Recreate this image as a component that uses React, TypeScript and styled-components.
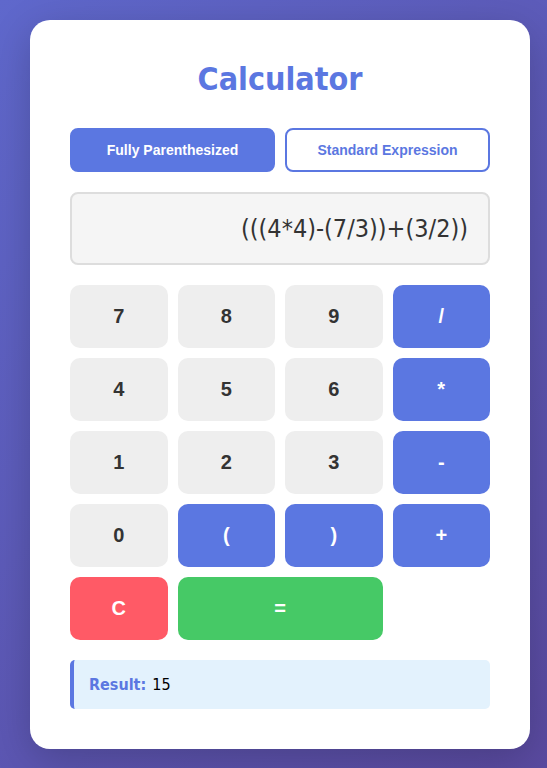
import React from "react";
import styled, { createGlobalStyle } from "styled-components";

const GlobalStyle = createGlobalStyle`
  html, body { margin: 0; padding: 0; }
  body {
    min-height: 100vh;
    background: linear-gradient(135deg, #5f68cc 0%, #5a4aa0 100%);
    font-family: "DejaVu Sans Condensed", "DejaVu Sans", sans-serif;
  }
`;

const Page = styled.div`
  min-height: 100vh;
  display: flex;
  align-items: center;
  justify-content: flex-start;
  padding-left: 30px;
  box-sizing: border-box;
`;

const Card = styled.div`
  width: 500px;
  box-sizing: border-box;
  background: #ffffff;
  border-radius: 20px;
  padding: 40px;
  box-shadow: 0 10px 40px rgba(0, 0, 0, 0.2);
`;

const Title = styled.h1`
  margin: 0 0 30px;
  text-align: center;
  color: #5b77e1;
  font-family: "DejaVu Sans Condensed", "DejaVu Sans", sans-serif;
  font-weight: 700;
  font-size: 32px;
  line-height: 38px;
`;

const ModeRow = styled.div`
  display: grid;
  grid-template-columns: 1fr 1fr;
  gap: 10px;
  margin-bottom: 20px;
`;

const ModeButton = styled.button<{ $active?: boolean }>`
  height: 44px;
  border-radius: 8px;
  border: 2px solid #5b77e1;
  background: ${(p) => (p.$active ? "#5b77e1" : "#ffffff")};
  color: ${(p) => (p.$active ? "#ffffff" : "#5b77e1")};
  font-family: "Liberation Sans", Arial, sans-serif;
  font-weight: 700;
  font-size: 14px;
  cursor: pointer;
`;

const Display = styled.div`
  height: 73px;
  box-sizing: border-box;
  border: 2px solid #dddddd;
  border-radius: 8px;
  background: #f5f5f5;
  padding: 0 20px;
  display: flex;
  align-items: center;
  justify-content: flex-end;
  font-family: "DejaVu Sans Condensed", "DejaVu Sans", sans-serif;
  font-size: 25px;
  color: #333333;
  margin-bottom: 20px;
`;

const Keys = styled.div`
  display: grid;
  grid-template-columns: repeat(4, 1fr);
  grid-auto-rows: 63px;
  gap: 10px;
  margin-bottom: 20px;
`;

type Variant = "num" | "op" | "clear" | "eq";

const bg: Record<Variant, string> = {
  num: "#eeeeee",
  op: "#5b77e1",
  clear: "#ff5a66",
  eq: "#46c966",
};

const Key = styled.button<{ $variant: Variant; $span?: number }>`
  grid-column: span ${(p) => p.$span ?? 1};
  border: none;
  border-radius: 10px;
  background: ${(p) => bg[p.$variant]};
  color: ${(p) => (p.$variant === "num" ? "#333333" : "#ffffff")};
  font-family: "Liberation Sans", Arial, sans-serif;
  font-weight: 700;
  font-size: 20px;
  cursor: pointer;
`;

const Result = styled.div`
  height: 49px;
  box-sizing: border-box;
  background: #e3f2fd;
  border-left: 4px solid #5b77e1;
  border-radius: 5px;
  padding: 0 15px;
  display: flex;
  align-items: center;
  gap: 6px;
  font-family: "DejaVu Sans Condensed", "DejaVu Sans", sans-serif;
  font-size: 16px;
  color: #000000;
`;

const ResultLabel = styled.strong`
  color: #5b77e1;
  font-weight: 700;
`;

const keys: { label: string; variant: Variant; span?: number }[] = [
  { label: "7", variant: "num" },
  { label: "8", variant: "num" },
  { label: "9", variant: "num" },
  { label: "/", variant: "op" },
  { label: "4", variant: "num" },
  { label: "5", variant: "num" },
  { label: "6", variant: "num" },
  { label: "*", variant: "op" },
  { label: "1", variant: "num" },
  { label: "2", variant: "num" },
  { label: "3", variant: "num" },
  { label: "-", variant: "op" },
  { label: "0", variant: "num" },
  { label: "(", variant: "op" },
  { label: ")", variant: "op" },
  { label: "+", variant: "op" },
  { label: "C", variant: "clear" },
  { label: "=", variant: "eq", span: 2 },
];

export default function App() {
  return (
    <>
      <GlobalStyle />
      <Page>
        <Card>
          <Title>Calculator</Title>
          <ModeRow>
            <ModeButton $active>Fully Parenthesized</ModeButton>
            <ModeButton>Standard Expression</ModeButton>
          </ModeRow>
          <Display>(((4*4)-(7/3))+(3/2))</Display>
          <Keys>
            {keys.map((k) => (
              <Key key={k.label} $variant={k.variant} $span={k.span}>
                {k.label}
              </Key>
            ))}
          </Keys>
          <Result>
            <ResultLabel>Result:</ResultLabel>
            <span>15</span>
          </Result>
        </Card>
      </Page>
    </>
  );
}
